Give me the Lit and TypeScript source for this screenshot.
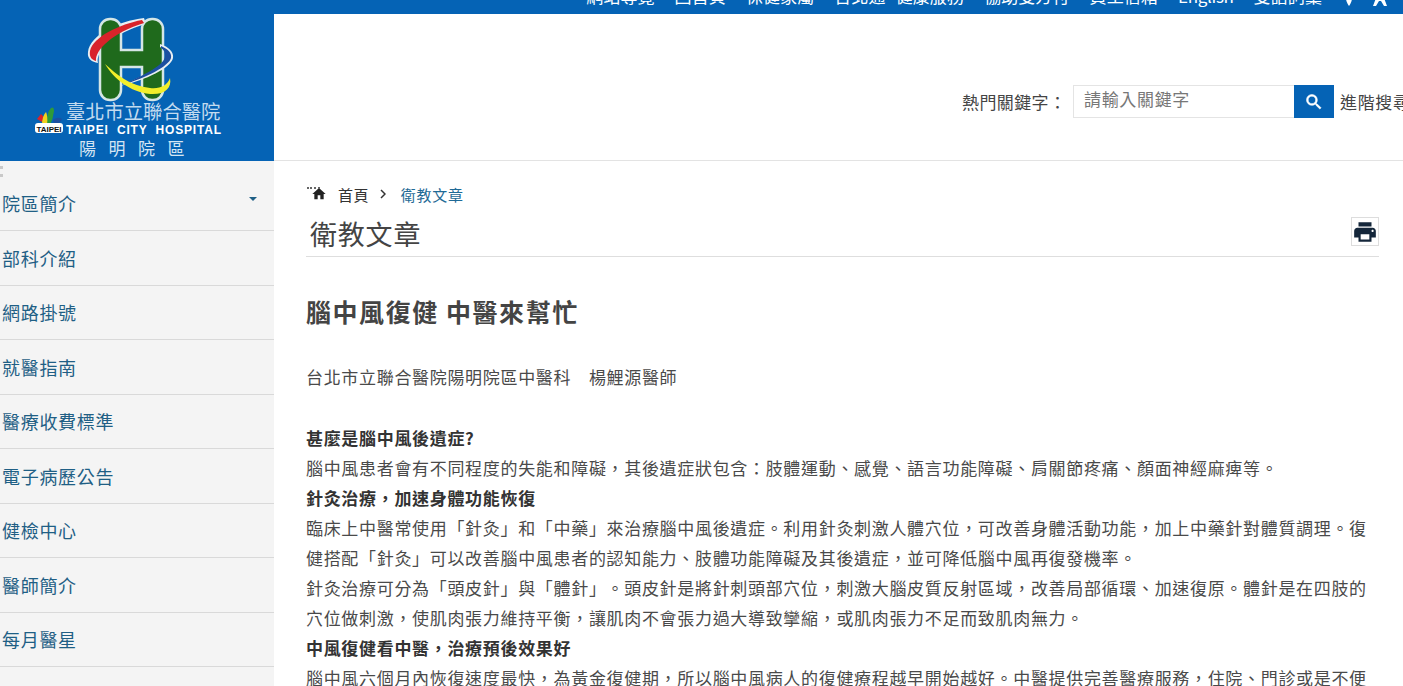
import { LitElement, html, css, svg } from "lit";
import { customElement } from "lit/decorators.js";

const NAV = ["院區簡介","部科介紹","網路掛號","就醫指南","醫療收費標準","電子病歷公告","健檢中心","醫師簡介","每月醫星"];

const logo = svg`
<svg class="logo" width="274" height="161" viewBox="0 0 274 161">
  <path d="M144 18 C118 21 90 35 88 52 C87 59 92 62 98 63 C95 52 113 33 146 24 Z" fill="#e8eef2"/>
  <path d="M100 29 a10 10 0 0 1 10 -10 h1 a10 10 0 0 1 10 10 v21 h21 v-21 a10 10 0 0 1 10 -10 h1 a10 10 0 0 1 10 10 v61 a10 10 0 0 1 -10 10 h-1 a10 10 0 0 1 -10 -10 v-23 h-21 v23 a10 10 0 0 1 -10 10 h-1 a10 10 0 0 1 -10 -10 z" fill="#1f6a1c" stroke="#d5e6e6" stroke-width="2.500"/>
  <path d="M142 20 C120 24 93 37 90 51 C89 57 92 60 96 61 C95 50 112 33 144 23 Z" fill="#d8232a"/>
  <path d="M160 44 C169 47 174 52 173 58 C171 68 146 80 120 86 C143 76 166 66 166 56 C166 52 164 49 160 47 Z" fill="#e8eef2"/>
  <path d="M161 46 C168 49 172 53 171 58 C169 66 146 78 122 85 C144 75 165 65 165 56 C165 52 164 50 161 48 Z" fill="#1c4fa0"/>
  <path d="M105 64 C116 74 130 86 150 88 C160 89 167 86 170 78 C172 88 165 95 150 94 C130 92 114 79 105 64 Z" fill="#f2ee2a"/>
  <g font-family="'Noto Sans CJK TC','Noto Sans',sans-serif">
    <text x="66" y="119" font-size="19.300" fill="#c3dbef">臺北市立聯合醫院</text>
    <text x="66" y="133.500" font-size="12" font-weight="700" font-family="'Liberation Sans',sans-serif" fill="#fff" textLength="155" xml:space="preserve">TAIPEI  CITY  HOSPITAL</text>
    <text x="79" y="155" font-size="17" letter-spacing="12.500" fill="#d4e5f3">陽明院區</text>
  </g>
  <path d="M37 119 l4 -5 l4 4 l-3 4z" fill="#d8232a"/>
  <path d="M46 125 q1 -13 5 -17 q3 -2 3 3 q-1 8 -4 14z" fill="#2e9a3a"/>
  <path d="M42 125 q0 -9 4 -13 q2 4 1 13z" fill="#f2d21f"/>
  <path d="M53 120 q5 -4 9 -1 q-2 5 -8 5z" fill="#1c4fa0"/>
  <rect x="35" y="123" width="28" height="10" rx="3" fill="#fff"/>
  <text x="36.500" y="131.500" font-size="8" font-weight="700" font-family="'Liberation Sans',sans-serif" fill="#111" textLength="25">TAIPEI</text>
</svg>`;

@customElement("app-root")
export class AppRoot extends LitElement {
  static styles = css`
    :host { display: block; width: 1403px; height: 686px; overflow: hidden; background: #fff;
      font-family: "Noto Sans CJK TC", "Noto Sans", sans-serif; color: #444; text-spacing-trim: space-all; }
    .page { display: grid; grid-template-columns: 274px 1129px; height: 686px; }
    .left { display: flex; flex-direction: column; background: #f4f4f4; height: 686px; overflow: hidden; }
    .logo-box { height: 161px; flex: none; background: #0563b5; }
    .logo { display: block; }
    .side { position: relative; padding-top: 15.500px; }
    .dots { position: absolute; left: 0; top: 5px; width: 3px; height: 11px;
      border-top: 3px solid #c9c9c9; border-bottom: 3px solid #c9c9c9; box-sizing: border-box; }
    .item { height: 54.500px; box-sizing: border-box; border-bottom: 1px solid #d9d9d9;
      display: flex; align-items: center; justify-content: space-between; padding: 0 17px 0 2px;
      font-size: 18px; letter-spacing: .7px; color: #1f5f85; }
    .caret { width: 0; height: 0; border: 4px solid transparent; border-top: 4px solid #1f5f85; border-bottom: 0; margin-bottom: 9px; }
    .right { display: flex; flex-direction: column; min-width: 0; }
    .top { height: 14px; flex: none; background: #0563b5; display: flex; justify-content: flex-end;
      align-items: flex-end; overflow: hidden; gap: 20px; padding-right: 15px; color: #fff; font-size: 17px; letter-spacing: .1px; line-height: 24px; }
    .top > * { flex: none; padding-bottom: 6px; }
    .pair { display: flex; gap: 10px; }
    .en { letter-spacing: -.3px; }
    .top svg { display: block; }
    .top .icons { display: flex; gap: 20px; align-items: flex-end; height: 24px; padding-bottom: 8px; margin-left: 4px; }
    .search { height: 147px; flex: none; box-sizing: border-box; border-bottom: 1px solid #e3e3e3;
      display: flex; align-items: flex-end; padding: 0 0 42px 688px; white-space: nowrap; }
    .search .label { width: 111px; height: 33px; line-height: 33px; font-size: 17px; letter-spacing: .4px; flex: none; color: #444; }
    .input { width: 221px; height: 33px; box-sizing: border-box; border: 1px solid #e4e4e4; border-right: 0; flex: none;
      font-size: 17px; line-height: 26px; letter-spacing: .67px; padding-left: 10px; color: #777; }
    .btn { width: 40px; height: 33px; background: #0563b5; flex: none; display: flex; align-items: center; justify-content: center; }
    .adv { flex: none; margin-left: 6px; height: 33px; line-height: 33px; font-size: 17px; letter-spacing: .67px; color: #444; }
    .main { padding: 0 24px 0 32px; }
    .crumb { display: flex; align-items: center; height: 20px; margin-top: 23px; font-size: 15px; letter-spacing: .4px; color: #333; position: relative; }
    .crumb .dash { position: absolute; left: 1px; top: 3px; width: 13px; height: 5px; border-top: 2px dotted #666; box-sizing: border-box; }
    .crumb .home { margin: 0 11px 0 5px; }
    .crumb .sep { margin: 0 15px 0 11px; display: block; }
    .crumb .cur { color: #1f6a96; letter-spacing: .75px; }
    .head { display: flex; justify-content: space-between; height: 48px; box-sizing: border-box; border-bottom: 1px solid #dedede; margin-top: 5px; }
    .head h2 { margin: 7px 0 0 4px; font-weight: 400; font-size: 27px; letter-spacing: .8px; line-height: 36px; color: #444; }
    .printer { width: 28px; height: 29px; box-sizing: border-box; border: 1px solid #ddd; display: flex; align-items: center; justify-content: center; margin-top: 8px; }
    h1 { margin: 36px 0 0; font-size: 25px; font-weight: 700; letter-spacing: 1.550px; line-height: 36px; color: #444; }
    .body { font-size: 17px; letter-spacing: .68px; line-height: 29.900px; color: #4a4a4a; margin-top: 33px; }
    .body p { margin: 0; }
    .body .gap { margin-top: 31.500px; }
    .body b { font-weight: 700; color: #333; }
  `;

  render() {
    return html`<div class="page" lang="zh-Hant-TW">
      <div class="left">
        <div class="logo-box">${logo}</div>
        <nav class="side">
          <div class="dots"></div>
          ${NAV.map((n, i) => html`<div class="item"><span>${n}</span>${i === 0 ? html`<span class="caret"></span>` : ""}</div>`)}
        </nav>
      </div>
      <div class="right">
        <div class="top">
          <span>網站導覽</span><span>回首頁</span><span>保健家屬</span>
          <span class="pair"><span>台北通</span><span>健康服務</span></span>
          <span>協助雙方付</span><span>員工信箱</span><span class="en">English</span><span>雙語詞彙</span>
          <span class="icons">
            <svg width="6" height="8" viewBox="0 0 6 8"><path d="M0 0h6c0 3-1.500 6-3 8C1.500 6 0 3 0 0z" fill="#fff"/></svg>
            <svg width="16" height="8" viewBox="0 0 16 8"><path d="M4 0h8l3 8h-3l-3-5H7L4 8H1z" fill="#fff"/></svg>
          </span>
        </div>
        <div class="search">
          <span class="label">熱門關鍵字：</span>
          <div class="input">請輸入關鍵字</div>
          <div class="btn"><svg width="20" height="20" viewBox="0 0 24 24"><path fill="#fff" stroke="#fff" stroke-width=".7" d="M15.500 14h-.79l-.28-.27A6.471 6.471 0 0 0 16 9.500 6.500 6.500 0 1 0 9.500 16c1.610 0 3.090-.59 4.230-1.570l.27.28v.79l5 4.990L20.490 19l-4.990-5zm-6 0C7.010 14 5 11.990 5 9.500S7.010 5 9.500 5 14 7.010 14 9.500 11.990 14 9.500 14z"/></svg></div>
          <span class="adv">進階搜尋</span>
        </div>
        <main class="main">
          <div class="crumb"><span class="dash"></span>
            <svg class="home" width="16" height="16" viewBox="0 0 24 24"><path fill="#222" d="M10 20v-6h4v6h5v-8h3L12 3 2 12h3v8z"/></svg>
            <span>首頁</span>
            <svg class="sep" width="6" height="10" viewBox="0 0 6 10"><path d="M1 1l4 4-4 4" fill="none" stroke="#333" stroke-width="1.500"/></svg>
            <span class="cur">衛教文章</span>
          </div>
          <div class="head">
            <h2>衛教文章</h2>
            <div class="printer"><svg width="26" height="26" viewBox="0 0 24 24"><path fill="#14263a" d="M19 8H5c-1.660 0-3 1.340-3 3v6h4v4h12v-4h4v-6c0-1.660-1.340-3-3-3zm-3 11H8v-5h8v5zm3-7c-.55 0-1-.45-1-1s.45-1 1-1 1 .45 1 1-.45 1-1 1zm-1-9H6v4h12V3z"/></svg></div>
          </div>
          <h1>腦中風復健 中醫來幫忙</h1>
          <div class="body">
            <p>台北市立聯合醫院陽明院區中醫科　楊鯉源醫師</p>
            <p class="gap"><b>甚麼是腦中風後遺症?</b></p>
            <p>腦中風患者會有不同程度的失能和障礙，其後遺症狀包含：肢體運動、感覺、語言功能障礙、肩關節疼痛、顏面神經麻痺等。</p>
            <p><b>針灸治療，加速身體功能恢復</b></p>
            <p>臨床上中醫常使用「針灸」和「中藥」來治療腦中風後遺症。利用針灸刺激人體穴位，可改善身體活動功能，加上中藥針對體質調理。復健搭配「針灸」可以改善腦中風患者的認知能力、肢體功能障礙及其後遺症，並可降低腦中風再復發機率。</p>
            <p>針灸治療可分為「頭皮針」與「體針」。頭皮針是將針刺頭部穴位，刺激大腦皮質反射區域，改善局部循環、加速復原。體針是在四肢的穴位做刺激，使肌肉張力維持平衡，讓肌肉不會張力過大導致攣縮，或肌肉張力不足而致肌肉無力。</p>
            <p><b>中風復健看中醫，治療預後效果好</b></p>
            <p>腦中風六個月內恢復速度最快，為黃金復健期，所以腦中風病人的復健療程越早開始越好。中醫提供完善醫療服務，住院、門診或是不便</p>
          </div>
        </main>
      </div>
    </div>`;
  }
}
